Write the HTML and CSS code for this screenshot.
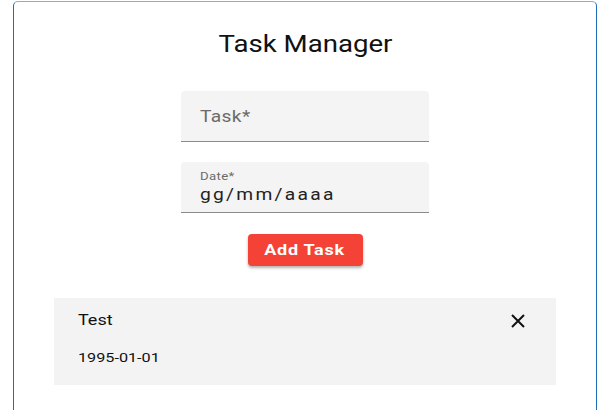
FILE: index.html
```html
<!DOCTYPE html>
<html>
<head>
<meta charset="utf-8">
<link rel="stylesheet" href="styles.css">
</head>
<body>
<div class="card">
  <h1 class="title"><span class="wide wide-center">Task Manager</span></h1>
  <form class="form">
    <div class="field">
      <span class="placeholder"><span class="wide">Task*</span></span>
    </div>
    <div class="field field-date">
      <span class="label"><span class="wide">Date*</span></span>
      <span class="value"><span class="wide">gg/mm/aaaa</span></span>
    </div>
    <button type="button" class="btn"><span class="wide wide-center">Add Task</span></button>
  </form>
  <ul class="list">
    <li class="item">
      <div class="item-row">
        <span class="item-name"><span class="wide">Test</span></span>
        <svg class="close" width="16" height="16" viewBox="0 0 16 16"><path d="M2 2 L14 14 M14 2 L2 14" stroke="#111" stroke-width="2" fill="none"/></svg>
      </div>
      <div class="item-date"><span class="wide">1995-01-01</span></div>
    </li>
  </ul>
</div>
</body>
</html>
```
FILE: styles.css
```css
html, body { margin: 0; padding: 0; background: #fff; }
body {
  font-family: Roboto, "Liberation Sans", sans-serif;
  color: #111;
  padding: 1px 14px 0 13px;
  overflow: hidden;
  height: 410px;
  box-sizing: border-box;
}
.wide {
  display: inline-block;
  transform: scaleX(1.2);
  transform-origin: left center;
}
.wide-center { transform-origin: center center; }
.card {
  border: 1px solid #1e6fb8;
  border-top-color: #86aedb;
  border-radius: 5px;
  height: 440px;
  box-sizing: border-box;
  padding: 0 40px;
}
.title {
  margin: 28px 0 0;
  font-size: 23px;
  font-weight: 400;
  text-align: center;
  line-height: 30px;
}
.form {
  display: flex;
  flex-direction: column;
  align-items: center;
  margin-top: 31px;
}
.field {
  width: 248px;
  height: 51px;
  background: #f4f4f4;
  border-radius: 4px 4px 0 0;
  border-bottom: 1px solid #8a8a8a;
  box-sizing: border-box;
  padding: 0 19px;
  display: flex;
  flex-direction: column;
  justify-content: center;
}
.field + .field { margin-top: 20px; }
.placeholder { font-size: 16px; color: #6b6b6b; letter-spacing: 0.3px; }
.field-date { justify-content: flex-start; padding-top: 8px; }
.label { font-size: 11px; color: #6b6b6b; letter-spacing: 0.3px; line-height: 13px; }
.value { font-size: 16px; color: #222; letter-spacing: 1.9px; line-height: 20px; margin-top: 2px; }
.btn {
  margin-top: 21px;
  width: 115px;
  height: 32px;
  background: #f44336;
  color: #fff;
  border: none;
  border-radius: 4px;
  font-family: inherit;
  font-size: 15px;
  font-weight: 700;
  letter-spacing: 0.6px;
  box-shadow: 0 2px 3px rgba(0,0,0,0.3);
}
.list { list-style: none; margin: 32px 0 0; padding: 0; }
.item {
  background: #f3f3f3;
  height: 87px;
  box-sizing: border-box;
  padding: 12px 30px 0 24px;
}
.item-row { display: flex; justify-content: space-between; align-items: center; height: 20px; }
.item-name { font-size: 15px; }
.close { display: block; margin-top: 2px; }
.item-date { font-size: 13.5px; margin-top: 19px; }
```
